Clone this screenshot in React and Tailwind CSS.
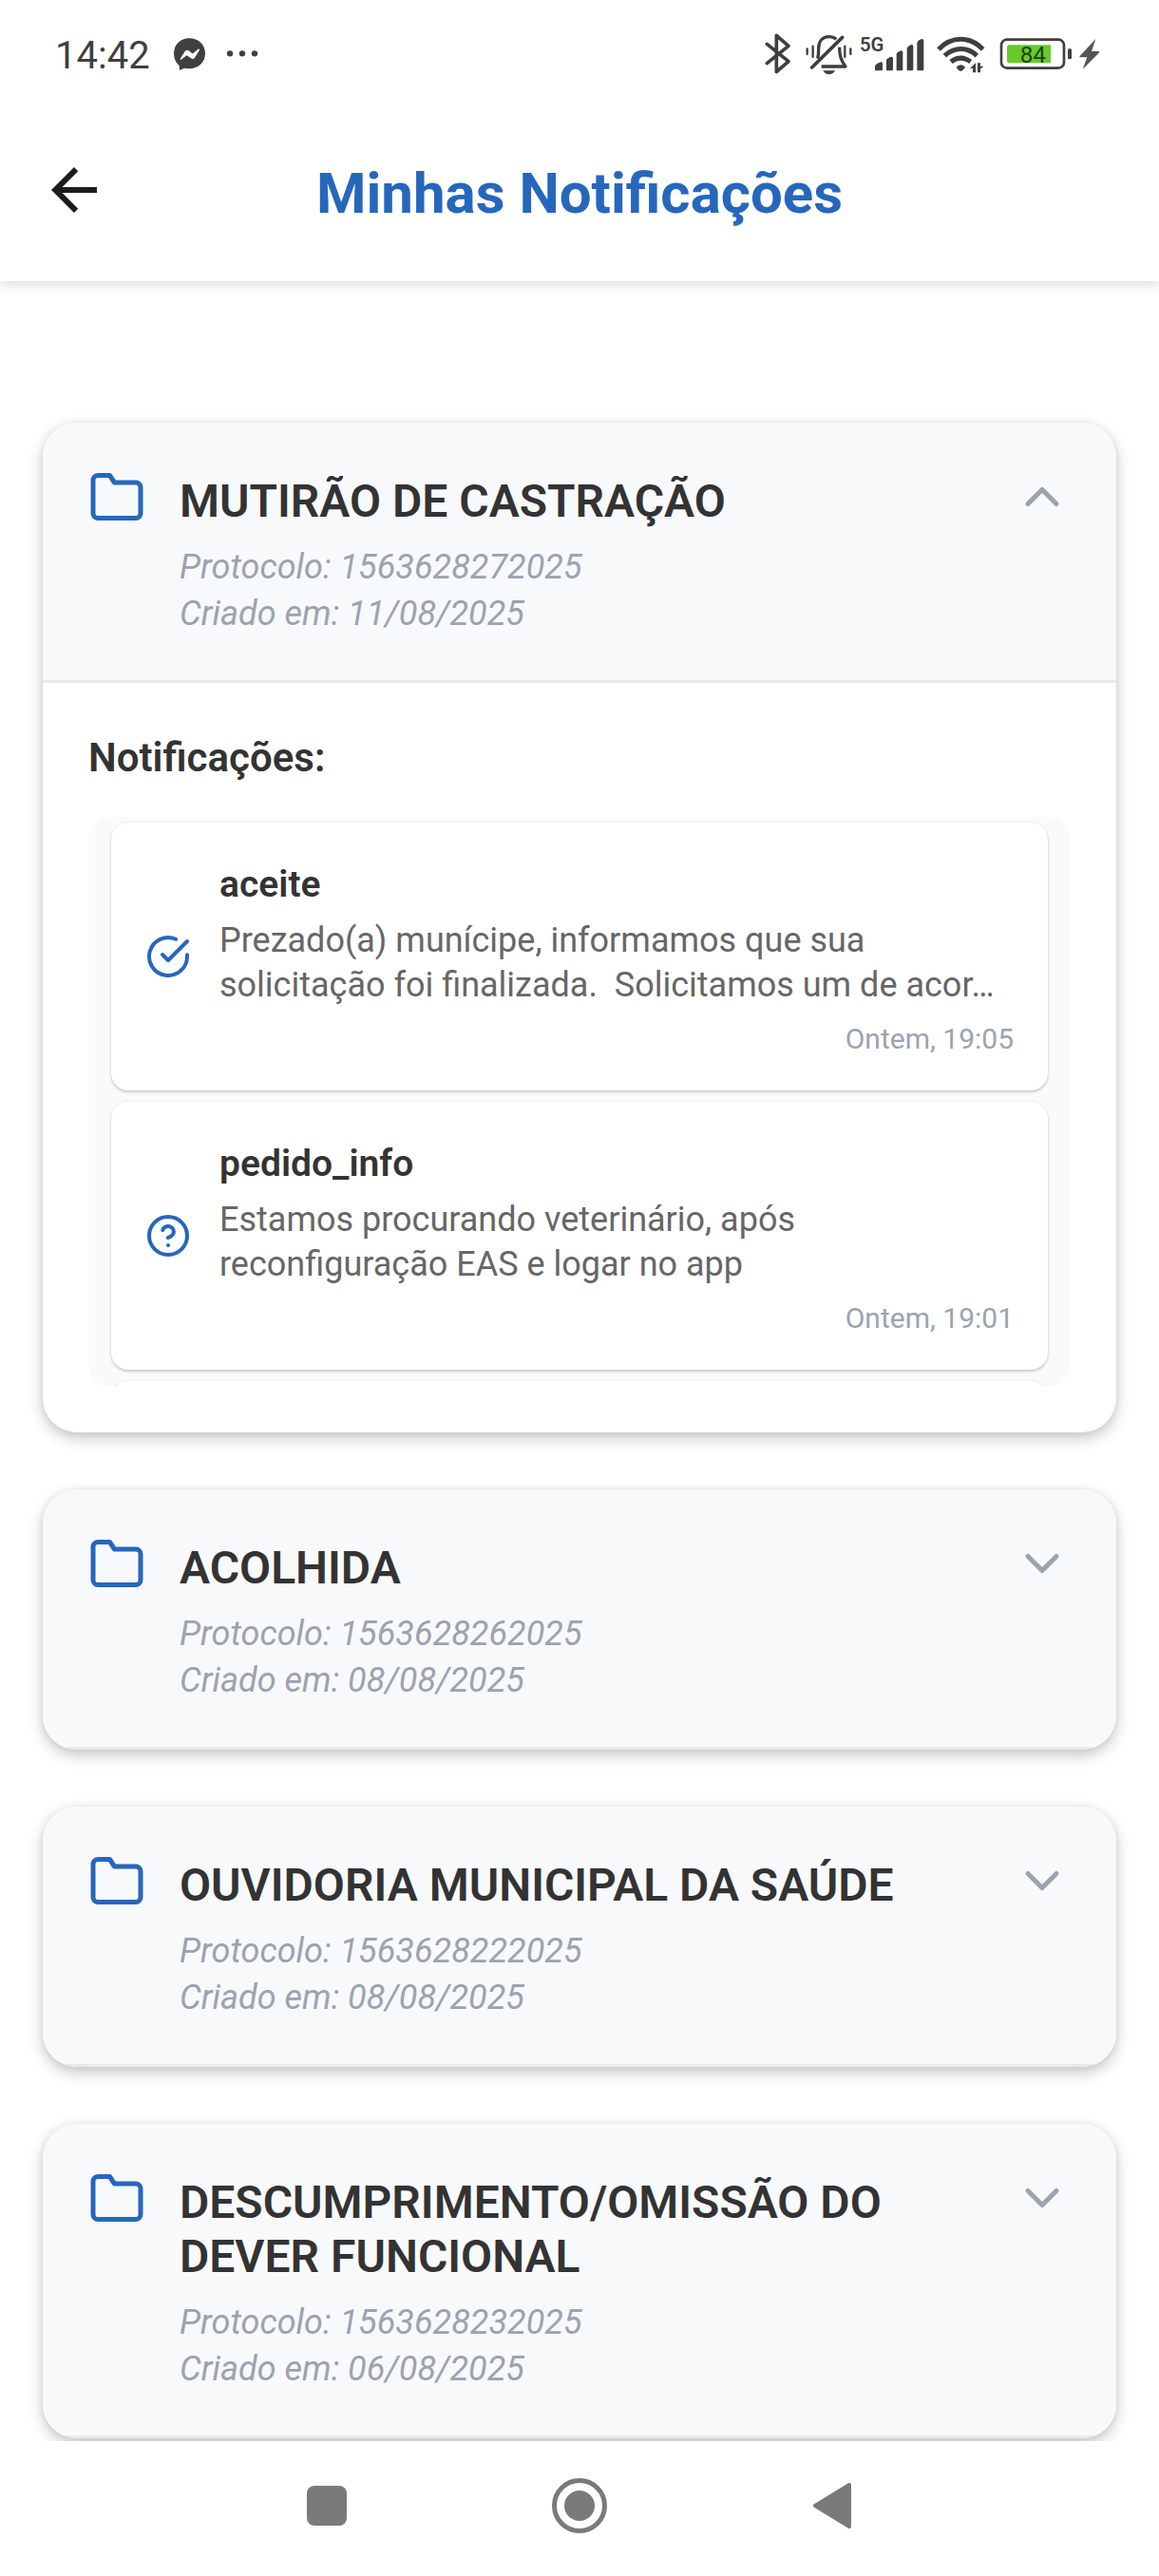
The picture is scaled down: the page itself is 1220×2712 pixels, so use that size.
import { useState } from 'react';

const requests = [
  {
    title: 'MUTIRÃO DE CASTRAÇÃO',
    protocol: '1563628272025',
    date: '11/08/2025',
    notifications: [
      {
        icon: 'check',
        title: 'aceite',
        text: 'Prezado(a) munícipe, informamos que sua solicitação foi finalizada.\u00a0 Solicitamos um de acor…',
        time: 'Ontem, 19:05',
      },
      {
        icon: 'help',
        title: 'pedido_info',
        text: 'Estamos procurando veterinário, após reconfiguração EAS e logar no app',
        time: 'Ontem, 19:01',
      },
      { icon: 'help', title: '', text: '', time: '' },
    ],
  },
  { title: 'ACOLHIDA', protocol: '1563628262025', date: '08/08/2025', notifications: [] },
  { title: 'OUVIDORIA MUNICIPAL DA SAÚDE', protocol: '1563628222025', date: '08/08/2025', notifications: [] },
  { title: 'DESCUMPRIMENTO/OMISSÃO DO DEVER FUNCIONAL', protocol: '1563628232025', date: '06/08/2025', notifications: [] },
];

function Stroke({ className, children }) {
  return (
    <svg
      viewBox="0 0 24 24"
      fill="none"
      stroke="currentColor"
      strokeWidth="2"
      strokeLinecap="round"
      strokeLinejoin="round"
      aria-hidden="true"
      className={className}
    >
      {children}
    </svg>
  );
}

function FolderIcon() {
  return (
    <Stroke className="size-[60px] shrink-0 text-[#2667bd]">
      <path d="M22 19a2 2 0 0 1-2 2H4a2 2 0 0 1-2-2V5a2 2 0 0 1 2-2h5l2 3h9a2 2 0 0 1 2 2z" />
    </Stroke>
  );
}

function NotificationIcon({ kind }) {
  return (
    <Stroke className="size-12 shrink-0 text-[#2667bd]">
      {kind === 'check' ? (
        <>
          <path d="M22 11.08V12a10 10 0 1 1-5.93-9.14" />
          <path d="M22 4 12 14.01l-3-3" />
        </>
      ) : (
        <>
          <circle cx="12" cy="12" r="10" />
          <path d="M9.09 9a3 3 0 0 1 5.83 1c0 2-3 3-3 3" />
          <path d="M12 17h.01" />
        </>
      )}
    </Stroke>
  );
}

function StatusBar() {
  return (
    <div className="flex h-28 items-start justify-between pt-[35px] pr-[62px] pl-[58px] text-[#3f3f3f]">
      <div className="flex items-start">
        <span className="text-[40px] leading-[48px]">14:42</span>
        <svg viewBox="546 104 270 132" className="ml-6 h-11 w-[90px]" aria-hidden="true">
          <path
            fill="currentColor"
            d="M598 120c28 0 50 20 50 48s-22 48-50 48c-6 0-11-1-16-2l-12 6c-2 1-3 0-3-2l-1-12c-11-9-17-22-17-38 0-28 21-48 49-48z"
          />
          <path fill="#fff" d="m569 185 15-24c3-4 8-5 12-2l10 8c1 1 3 1 4 0l16-13c2-2 5 1 4 3l-15 24c-3 4-8 5-12 2l-11-8c-1-1-3-1-4 0l-16 12c-2 2-4 0-3-2z" />
          <g fill="currentColor">
            <circle cx="726" cy="168" r="9.500" />
            <circle cx="765" cy="168" r="9.500" />
            <circle cx="804" cy="168" r="9.500" />
          </g>
        </svg>
      </div>
      <div className="flex items-start">
        <svg viewBox="75 104 81 132" className="h-11 w-[27px]" fill="none" stroke="currentColor" strokeWidth="11" strokeLinecap="round" strokeLinejoin="round" aria-hidden="true">
          <path d="m82 138 68 55-38 33V111l38 33-68 55" />
        </svg>
        <svg viewBox="204 104 147 132" className="ml-4 h-11 w-[49px]" fill="none" stroke="currentColor" strokeWidth="10" aria-hidden="true">
          <path d="M242 184c3-10 3-18 3-32 0-22 12-37 33-37 9 0 17 3 23 8" />
          <path d="M311 148c-1 24 4 42 19 61h-76" strokeLinejoin="round" />
          <path d="m224 212 96-95" strokeWidth="11" strokeLinecap="round" />
          <path d="M259 222h38c-4 8-11 12-19 12s-15-4-19-12z" fill="currentColor" stroke="none" />
          <g strokeWidth="7" strokeLinecap="round">
            <path d="M209 153v17M227 145v34M328 145v34M346 153v17" />
          </g>
        </svg>
        <svg viewBox="375 104 204 132" className="ml-2 h-11 w-[68px]" fill="currentColor" aria-hidden="true">
          <text x="375" y="162" fontSize="61" fontWeight="600" fontFamily="Roboto">5G</text>
          <path d="M423 222v-13c0-5 11-13 20-14q4 0 4 5v18q0 4-4 4zM459 222v-34c2-5 10-9 16-10q5 0 5 5v35q0 4-4 4zM491 222v-52c2-6 10-10 15-11q5 0 5 5v54q0 4-4 4zM524 222v-70c2-6 10-11 15-12q5 0 5 5v73q0 4-4 4zM556 222v-88c2-6 10-11 15-12q6 0 6 5v91q0 4-4 4z" />
        </svg>
        <svg viewBox="615 104 156 132" className="ml-3 h-11 w-[52px]" fill="none" stroke="currentColor" strokeWidth="15" aria-hidden="true">
          <path d="M624 155c40-43 100-43 140 0" />
          <path d="M643 175c31-29 71-29 102 0" />
          <path d="M663 194c20-15 42-15 62 0" />
          <path d="M680 211c8-10 20-10 28 0-3 7-9 11-14 13-6-2-11-6-14-13z" fill="currentColor" stroke="none" />
          <g fill="currentColor" stroke="none">
            <path d="M741 198v30h-9v-13h-9zM747 228v-30h9v10h10l-7 7h-3v13z" />
          </g>
        </svg>
        <svg viewBox="816 104 231 132" className="ml-[15px] h-11 w-[77px]" aria-hidden="true">
          <rect x="822" y="124" width="198" height="90" rx="18" fill="none" stroke="currentColor" strokeWidth="8" />
          <path d="M848 141h130v57H848q-8 0-8-8v-41q0-8 8-8z" fill="#67cb2b" />
          <rect x="1032" y="152" width="12" height="34" rx="5" fill="currentColor" />
          <text x="922" y="198" textAnchor="middle" fontSize="73" fill="#23410f" fontFamily="Roboto">84</text>
        </svg>
        <svg viewBox="1068 104 66 132" className="ml-[7px] h-11 w-[22px]" fill="#555" aria-hidden="true">
          <path d="m1120 122-50 54c-2 3-1 4 2 4h21l-14 38 51-52c3-3 2-5-2-5h-21z" />
        </svg>
      </div>
    </div>
  );
}

function NotificationItem({ item }) {
  return (
    <li className="flex min-h-[282px] shrink-0 items-center rounded-[18px] bg-white px-9 shadow-[0_2px_3px_rgba(0,0,0,0.18),0_0_3px_rgba(0,0,0,0.08)]">
      <NotificationIcon kind={item.icon} />
      <div className="ml-[30px] min-w-0 flex-1 pt-[41px] pb-9">
        <h3 className="mb-3 text-[39px] leading-[48px] font-semibold text-[#333]">{item.title}</h3>
        <p className="line-clamp-2 text-[36px] leading-[47px] text-[#666]">{item.text}</p>
        <p className="mt-[15px] text-right text-[30px] leading-[36px] text-[#9ca3af]">{item.time}</p>
      </div>
    </li>
  );
}

function RequestCard({ request, open, onToggle }) {
  return (
    <section className="overflow-hidden rounded-[36px] bg-white shadow-[0_6px_16px_rgba(0,0,0,0.22),0_0_8px_rgba(0,0,0,0.06)]">
      <button
        type="button"
        onClick={onToggle}
        aria-expanded={open}
        className="flex w-full items-start border-b-[3px] border-[#e8eaec] bg-[#f8f9fb] px-12 pt-12 pb-[45px] text-left"
      >
        <FolderIcon />
        <span className="ml-9 flex min-w-0 flex-1 flex-col pt-1.5 pr-12">
          <span className="mb-[17px] text-[48px] leading-[57px] font-semibold text-[#333]">{request.title}</span>
          <span className="text-[36px] leading-[49px] text-[#9ca3af] italic">Protocolo: {request.protocol}</span>
          <span className="text-[36px] leading-[49px] text-[#9ca3af] italic">Criado em: {request.date}</span>
        </span>
        <Stroke className="size-[60px] shrink-0 text-[#9ca3af]">
          <path d={open ? 'm18 15-6-6-6 6' : 'm6 9 6 6 6-6'} />
        </Stroke>
      </button>
      {open && (
        <div className="px-12 pt-[49px] pb-12">
          <h2 className="mb-8 text-[42px] leading-[60px] font-semibold text-[#333]">Notificações:</h2>
          <ul className="flex h-[600px] flex-col gap-3 overflow-hidden rounded-3xl bg-[#fafafa] px-6 pt-1.5">
            {request.notifications.map((item, i) => (
              <NotificationItem key={i} item={item} />
            ))}
          </ul>
        </div>
      )}
    </section>
  );
}

export default function App() {
  const [openIndex, setOpenIndex] = useState(0);
  return (
    <div className="flex h-screen flex-col bg-white font-[Roboto,sans-serif]">
      <header className="z-10 bg-white shadow-[0_3px_14px_rgba(0,0,0,0.15)]">
        <StatusBar />
        <div className="grid grid-cols-[72px_1fr_72px] items-start px-[42px] py-[52px]">
          <button type="button" aria-label="Voltar">
            <svg viewBox="0 0 24 24" className="size-[72px]" fill="#1c1c1e" aria-hidden="true">
              <path d="M20 11H7.830l5.590-5.590L12 4l-8 8 8 8 1.410-1.410L7.830 13H20z" />
            </svg>
          </button>
          <h1 className="text-center text-[60px] leading-[80px] font-bold text-[#2667bd]">Minhas Notificações</h1>
        </div>
      </header>
      <main className="flex min-h-0 flex-1 flex-col gap-[60px] overflow-hidden px-[45px] pt-[149px]">
        {requests.map((request, i) => (
          <div key={request.protocol} className="shrink-0">
            <RequestCard request={request} open={openIndex === i} onToggle={() => setOpenIndex(openIndex === i ? -1 : i)} />
          </div>
        ))}
      </main>
      <nav className="flex h-[142px] shrink-0 items-start justify-center gap-[206px] bg-white pt-[38px] text-[#7a7a7a]">
        <button type="button" aria-label="Recentes">
          <svg viewBox="0 0 60 60" className="size-[60px]" fill="currentColor" aria-hidden="true">
            <rect x="9" y="9" width="42" height="42" rx="8" />
          </svg>
        </button>
        <button type="button" aria-label="Início">
          <svg viewBox="0 0 60 60" className="size-[60px]" aria-hidden="true">
            <circle cx="30" cy="30" r="26.500" fill="none" stroke="currentColor" strokeWidth="5" />
            <circle cx="30" cy="30" r="16" fill="currentColor" />
          </svg>
        </button>
        <button type="button" aria-label="Retornar">
          <svg viewBox="0 0 60 60" className="size-[60px]" fill="currentColor" stroke="currentColor" strokeWidth="4" strokeLinejoin="round" aria-hidden="true">
            <path d="m12 30 36-22v44z" />
          </svg>
        </button>
      </nav>
    </div>
  );
}
